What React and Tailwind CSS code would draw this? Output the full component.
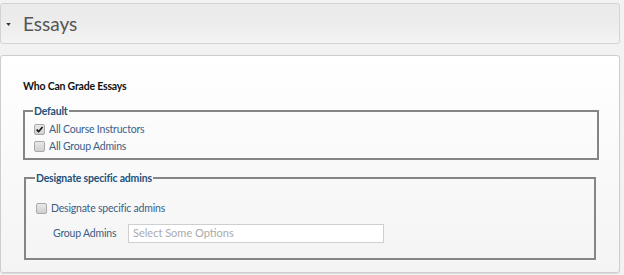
const font = { fontFamily: '"Lato", "Open Sans", sans-serif' }

function Checkbox({ checked }) {
  return (
    <span className="relative inline-flex w-[11px] h-[11px] shrink-0 rounded-[2px] border border-[#a9a9a9] bg-gradient-to-b from-[#e9e9e9] to-[#cfcfcf]">
      {checked && (
        <svg viewBox="0 0 10 10" className="absolute left-[0px] top-[0px] w-[9px] h-[9px]">
          <path d="M1.8 5.2 L4 7.4 L8.4 2.2" fill="none" stroke="#111" strokeWidth="1.8" />
        </svg>
      )}
    </span>
  )
}

function Option({ checked, label }) {
  return (
    <label className="flex items-center gap-[4px] h-[17px] text-[10.5px] tracking-[-0.2px] text-[#3b5e85]">
      <Checkbox checked={checked} />
      <span>{label}</span>
    </label>
  )
}

export default function App() {
  return (
    <div className="w-[624px] h-[275px] bg-[#f2f2f2] pt-[3px] pr-[4px]" style={font}>
      {/* Section header */}
      <div className="h-[41px] rounded-[3px] border border-[#d3d3d3] bg-gradient-to-b from-[#ebebeb] via-[#ececec] to-[#f4f4f4] flex items-center">
        <svg viewBox="0 0 6 4" className="ml-[5px] w-[5px] h-[3px] mt-[1px]">
          <path d="M0 0 L6 0 L3 4 Z" fill="#333" />
        </svg>
        <span className="ml-[12px] text-[19px] text-[#555] leading-none">Essays</span>
      </div>

      {/* Panel */}
      <div className="mt-[11px] h-[218px] rounded-[3px] border border-[#cdcdcd] bg-gradient-to-b from-white to-[#f4f4f4] shadow-[0_1px_1px_rgba(0,0,0,0.08)] pl-[22px] pr-[20px] pt-[24px]">
        <h3 className="text-[10.5px] tracking-[-0.2px] leading-[13px] font-bold text-[#111]">Who Can Grade Essays</h3>

        <fieldset className="mt-[11px] border-2 border-[#858585] pl-[8px] pb-[3px]">
          <legend className="px-[1px] text-[10.5px] tracking-[-0.2px] leading-[14px] font-bold text-[#23527c]">Default</legend>
          <div className="pt-[3px] pl-px">
            <Option checked label="All Course Instructors" />
            <Option label="All Group Admins" />
          </div>
        </fieldset>

        <fieldset className="mt-[11px] ml-px mr-[3px] border-2 border-[#858585] pl-[9px] pb-[15px]">
          <legend className="px-[1px] text-[10.5px] tracking-[-0.2px] leading-[14px] font-bold text-[#23527c]">Designate specific admins</legend>
          <div className="pt-[15px] pl-px">
            <Option label="Designate specific admins" />
            <div className="mt-[7px] flex items-center">
              <span className="ml-[17px] w-[75px] text-[10.5px] tracking-[-0.2px] text-[#3b5e85]">Group Admins</span>
              <div className="w-[256px] h-[19px] border border-[#cfcfcf] bg-white flex items-center pl-[4px] text-[11px] text-[#aaa]">
                Select Some Options
              </div>
            </div>
          </div>
        </fieldset>
      </div>
    </div>
  )
}
